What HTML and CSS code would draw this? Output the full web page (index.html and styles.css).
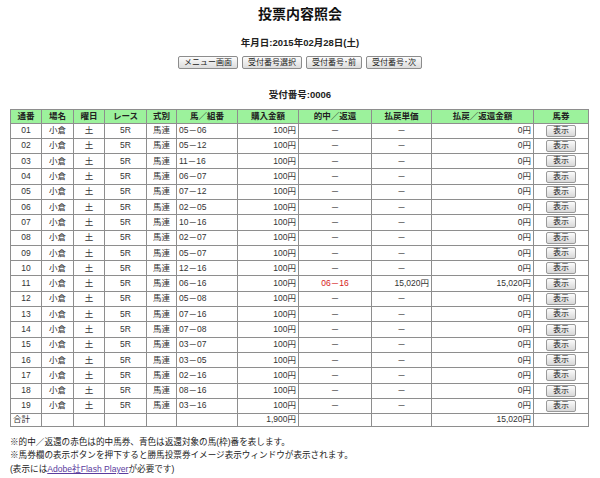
FILE: index.html
```html
<!DOCTYPE html>
<html lang="ja">
<head>
<meta charset="utf-8">
<title>投票内容照会</title>
<link rel="stylesheet" href="styles.css">
</head>
<body>
<h1 class="title">投票内容照会</h1>
<p class="date">年月日:2015年02月28日(土)</p>
<div class="nav">
  <button class="btn">メニュー画面</button>
  <button class="btn">受付番号選択</button>
  <button class="btn">受付番号･前</button>
  <button class="btn">受付番号･次</button>
</div>
<p class="receipt">受付番号:0006</p>
<table class="bets">
  <colgroup>
    <col style="width:31px"><col style="width:32px"><col style="width:31px"><col style="width:42px"><col style="width:30px"><col style="width:61px"><col style="width:61px"><col style="width:73px"><col style="width:60px"><col style="width:102px"><col>
  </colgroup>
  <thead>
    <tr><th>通番</th><th>場名</th><th>曜日</th><th>レース</th><th>式別</th><th>馬／組番</th><th>購入金額</th><th>的中／返還</th><th>払戻単価</th><th>払戻／返還金額</th><th>馬券</th></tr>
  </thead>
  <tbody>
    <tr><td class="c">01</td><td class="c">小倉</td><td class="c">土</td><td class="c">5R</td><td class="c">馬連</td><td class="l">05－06</td><td class="r">100円</td><td class="c">－</td><td class="c">－</td><td class="r">0円</td><td class="c"><button class="show">表示</button></td></tr>
    <tr><td class="c">02</td><td class="c">小倉</td><td class="c">土</td><td class="c">5R</td><td class="c">馬連</td><td class="l">05－12</td><td class="r">100円</td><td class="c">－</td><td class="c">－</td><td class="r">0円</td><td class="c"><button class="show">表示</button></td></tr>
    <tr><td class="c">03</td><td class="c">小倉</td><td class="c">土</td><td class="c">5R</td><td class="c">馬連</td><td class="l">11－16</td><td class="r">100円</td><td class="c">－</td><td class="c">－</td><td class="r">0円</td><td class="c"><button class="show">表示</button></td></tr>
    <tr><td class="c">04</td><td class="c">小倉</td><td class="c">土</td><td class="c">5R</td><td class="c">馬連</td><td class="l">06－07</td><td class="r">100円</td><td class="c">－</td><td class="c">－</td><td class="r">0円</td><td class="c"><button class="show">表示</button></td></tr>
    <tr><td class="c">05</td><td class="c">小倉</td><td class="c">土</td><td class="c">5R</td><td class="c">馬連</td><td class="l">07－12</td><td class="r">100円</td><td class="c">－</td><td class="c">－</td><td class="r">0円</td><td class="c"><button class="show">表示</button></td></tr>
    <tr><td class="c">06</td><td class="c">小倉</td><td class="c">土</td><td class="c">5R</td><td class="c">馬連</td><td class="l">02－05</td><td class="r">100円</td><td class="c">－</td><td class="c">－</td><td class="r">0円</td><td class="c"><button class="show">表示</button></td></tr>
    <tr><td class="c">07</td><td class="c">小倉</td><td class="c">土</td><td class="c">5R</td><td class="c">馬連</td><td class="l">10－16</td><td class="r">100円</td><td class="c">－</td><td class="c">－</td><td class="r">0円</td><td class="c"><button class="show">表示</button></td></tr>
    <tr><td class="c">08</td><td class="c">小倉</td><td class="c">土</td><td class="c">5R</td><td class="c">馬連</td><td class="l">02－07</td><td class="r">100円</td><td class="c">－</td><td class="c">－</td><td class="r">0円</td><td class="c"><button class="show">表示</button></td></tr>
    <tr><td class="c">09</td><td class="c">小倉</td><td class="c">土</td><td class="c">5R</td><td class="c">馬連</td><td class="l">05－07</td><td class="r">100円</td><td class="c">－</td><td class="c">－</td><td class="r">0円</td><td class="c"><button class="show">表示</button></td></tr>
    <tr><td class="c">10</td><td class="c">小倉</td><td class="c">土</td><td class="c">5R</td><td class="c">馬連</td><td class="l">12－16</td><td class="r">100円</td><td class="c">－</td><td class="c">－</td><td class="r">0円</td><td class="c"><button class="show">表示</button></td></tr>
    <tr><td class="c">11</td><td class="c">小倉</td><td class="c">土</td><td class="c">5R</td><td class="c">馬連</td><td class="l">06－16</td><td class="r">100円</td><td class="c hit">06－16</td><td class="r">15,020円</td><td class="r">15,020円</td><td class="c"><button class="show">表示</button></td></tr>
    <tr><td class="c">12</td><td class="c">小倉</td><td class="c">土</td><td class="c">5R</td><td class="c">馬連</td><td class="l">05－08</td><td class="r">100円</td><td class="c">－</td><td class="c">－</td><td class="r">0円</td><td class="c"><button class="show">表示</button></td></tr>
    <tr><td class="c">13</td><td class="c">小倉</td><td class="c">土</td><td class="c">5R</td><td class="c">馬連</td><td class="l">07－16</td><td class="r">100円</td><td class="c">－</td><td class="c">－</td><td class="r">0円</td><td class="c"><button class="show">表示</button></td></tr>
    <tr><td class="c">14</td><td class="c">小倉</td><td class="c">土</td><td class="c">5R</td><td class="c">馬連</td><td class="l">07－08</td><td class="r">100円</td><td class="c">－</td><td class="c">－</td><td class="r">0円</td><td class="c"><button class="show">表示</button></td></tr>
    <tr><td class="c">15</td><td class="c">小倉</td><td class="c">土</td><td class="c">5R</td><td class="c">馬連</td><td class="l">03－07</td><td class="r">100円</td><td class="c">－</td><td class="c">－</td><td class="r">0円</td><td class="c"><button class="show">表示</button></td></tr>
    <tr><td class="c">16</td><td class="c">小倉</td><td class="c">土</td><td class="c">5R</td><td class="c">馬連</td><td class="l">03－05</td><td class="r">100円</td><td class="c">－</td><td class="c">－</td><td class="r">0円</td><td class="c"><button class="show">表示</button></td></tr>
    <tr><td class="c">17</td><td class="c">小倉</td><td class="c">土</td><td class="c">5R</td><td class="c">馬連</td><td class="l">02－16</td><td class="r">100円</td><td class="c">－</td><td class="c">－</td><td class="r">0円</td><td class="c"><button class="show">表示</button></td></tr>
    <tr><td class="c">18</td><td class="c">小倉</td><td class="c">土</td><td class="c">5R</td><td class="c">馬連</td><td class="l">08－16</td><td class="r">100円</td><td class="c">－</td><td class="c">－</td><td class="r">0円</td><td class="c"><button class="show">表示</button></td></tr>
    <tr><td class="c">19</td><td class="c">小倉</td><td class="c">土</td><td class="c">5R</td><td class="c">馬連</td><td class="l">03－16</td><td class="r">100円</td><td class="c">－</td><td class="c">－</td><td class="r">0円</td><td class="c"><button class="show">表示</button></td></tr>
  </tbody>
  <tfoot>
    <tr><td class="l">合計</td><td></td><td></td><td></td><td></td><td></td><td class="r">1,900円</td><td></td><td></td><td class="r">15,020円</td><td></td></tr>
  </tfoot>
</table>
<div class="notes">
  <p>※的中／返還の赤色は的中馬券、青色は返還対象の馬(枠)番を表します。</p>
  <p>※馬券欄の表示ボタンを押下すると勝馬投票券イメージ表示ウィンドウが表示されます。</p>
  <p>(表示には<a href="#" class="link">Adobe社Flash Player</a>が必要です)</p>
</div>
</body>
</html>
```
FILE: styles.css
```css
html, body {
  margin: 0;
  padding: 0;
  background: #fff;
  color: #222;
  font-family: "Liberation Sans", "Noto Sans CJK JP", sans-serif;
}

.title {
  margin: 6px 0 0;
  font-size: 14px;
  line-height: 16px;
  font-weight: bold;
  text-align: center;
  color: #111;
}

.date {
  margin: 15px 0 0;
  font-size: 9.5px;
  line-height: 12px;
  font-weight: bold;
  text-align: center;
}

.nav {
  margin-top: 7px;
  display: flex;
  justify-content: center;
  gap: 4px;
  height: 13px;
}

.btn {
  margin: 0;
  padding: 0 5px;
  height: 13px;
  font-family: inherit;
  font-size: 8px;
  line-height: 11px;
  color: #222;
  background: linear-gradient(#fcfcfc, #dcdcdc);
  border: 1px solid #8c8c8c;
  border-radius: 2px;
}

.receipt {
  margin: 20px 0 0;
  font-size: 9.5px;
  line-height: 12px;
  font-weight: bold;
  text-align: center;
}

.bets {
  margin: 8px 0 0 10px;
  width: 579px;
  border-collapse: collapse;
  table-layout: fixed;
  font-size: 8.5px;
  color: #333;
}

.bets th, .bets td {
  border: 1px solid #8e8e8e;
  padding: 0 2px;
  white-space: nowrap;
  overflow: hidden;
}

.bets th {
  height: 12.5px;
  line-height: 11px;
  background: #9cf29c;
  font-weight: bold;
  color: #222;
  text-align: center;
}

.bets tbody td {
  height: 14.3px;
  line-height: 11px;
}

.bets tfoot td {
  height: 11.5px;
  line-height: 11px;
}

.c { text-align: center; }
.l { text-align: left; }
.r { text-align: right; }

.hit { color: #d62020; }

.show {
  display: block;
  margin: 0 auto;
  padding: 0;
  width: 30px;
  height: 12px;
  font-family: inherit;
  font-size: 8px;
  line-height: 10px;
  color: #222;
  background: linear-gradient(#fbfbfb, #d8d8d8);
  border: 1px solid #9a9a9a;
  border-radius: 2px;
}

.notes {
  margin: 9px 0 0 10px;
  font-size: 8.6px;
  line-height: 13.5px;
  color: #222;
}

.notes p {
  margin: 0;
}

.link {
  color: #5b3c9e;
  text-decoration: underline;
}
```
